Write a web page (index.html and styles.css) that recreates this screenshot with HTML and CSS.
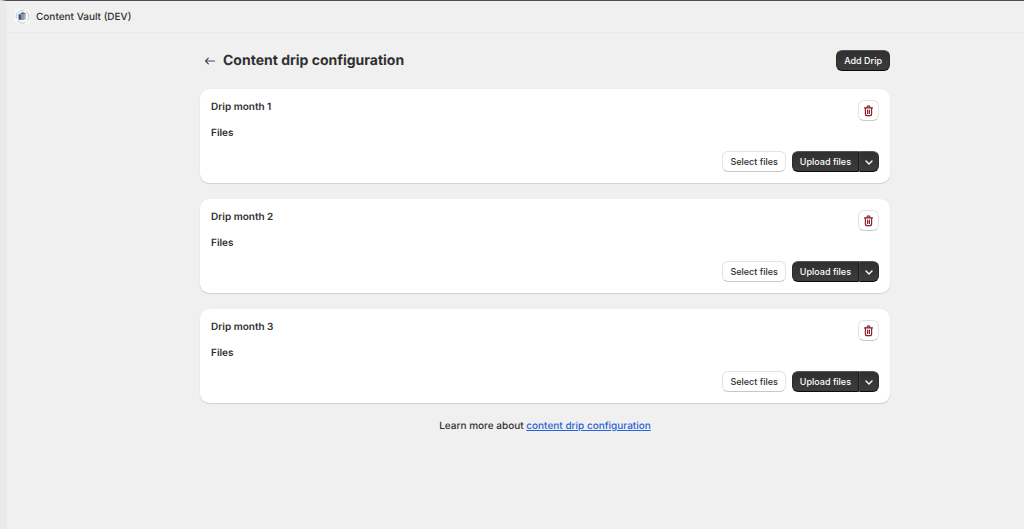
FILE: index.html
```html
<!DOCTYPE html>
<html lang="en">
<head>
<meta charset="UTF-8">
<meta name="viewport" content="width=device-width, initial-scale=1.0">
<title>Content Vault (DEV)</title>
<link rel="stylesheet" href="styles.css">
</head>
<body>
<svg class="sprite" aria-hidden="true">
  <symbol id="trash" viewBox="0 0 12 12">
    <path d="M1.500 2.900h8M4 2.700C4 .3 7 .3 7 2.700M2.400 3v5.700q0 2 1.800 2h2.600q1.800 0 1.800-2V3M4.600 5v3.400M6.400 5v3.400" fill="none" stroke="currentColor" stroke-width="1.200" stroke-linecap="round"/>
  </symbol>
  <symbol id="chevron" viewBox="0 0 10 10">
    <path d="M2 4l3 3 3-3" fill="none" stroke="currentColor" stroke-width="1.400" stroke-linecap="round" stroke-linejoin="round"/>
  </symbol>
</svg>

<header class="app-bar">
  <svg class="logo" viewBox="0 0 16 16" aria-hidden="true">
    <rect width="16" height="16" rx="4" fill="#fafafa"/>
    <path d="M1.500 10A7 7 0 0 1 10 1.500" fill="none" stroke="#8fc6e8" stroke-width=".9"/>
    <path d="M12 2.500A7 7 0 0 1 13 13M11 14.400A7 7 0 0 1 2.500 12" fill="none" stroke="#a9b3c3" stroke-width=".8"/>
    <path d="M3.800 5.500L8 3.800l3.500 1V11l-3.500 1-4.200-.8z" fill="#a4adbb"/>
    <path d="M3.800 5.500l3 .5v5.800l-3-.6z" fill="#4c5870"/>
    <path d="M6 4.600l2-.8 3 .9-2.500.8zM8.500 6v5.500" fill="#4c5870" stroke="#69758b" stroke-width=".7"/>
  </svg>
  <span>Content Vault (DEV)</span>
</header>

<main class="page">
  <div class="page-header">
    <a class="back" href="#" aria-label="Back">
      <svg viewBox="0 0 12 12"><path d="M10.500 6H1.500M4.300 3.200L1.500 6l2.800 2.800" fill="none" stroke="currentColor" stroke-width="1.200" stroke-linecap="round" stroke-linejoin="round"/></svg>
    </a>
    <h1>Content drip configuration</h1>
    <button class="btn btn-dark" type="button">Add Drip</button>
  </div>

  <section class="card">
    <div class="card-text">
      <h2>Drip month 1</h2>
      <h3>Files</h3>
    </div>
    <button class="btn btn-icon" type="button" aria-label="Delete drip month 1"><svg><use href="#trash"/></svg></button>
    <div class="actions">
      <button class="btn" type="button">Select files</button>
      <div class="btn-group">
        <button class="btn btn-dark" type="button">Upload files</button>
        <button class="btn btn-dark btn-more" type="button" aria-label="More upload options"><svg><use href="#chevron"/></svg></button>
      </div>
    </div>
  </section>

  <section class="card">
    <div class="card-text">
      <h2>Drip month 2</h2>
      <h3>Files</h3>
    </div>
    <button class="btn btn-icon" type="button" aria-label="Delete drip month 2"><svg><use href="#trash"/></svg></button>
    <div class="actions">
      <button class="btn" type="button">Select files</button>
      <div class="btn-group">
        <button class="btn btn-dark" type="button">Upload files</button>
        <button class="btn btn-dark btn-more" type="button" aria-label="More upload options"><svg><use href="#chevron"/></svg></button>
      </div>
    </div>
  </section>

  <section class="card">
    <div class="card-text">
      <h2>Drip month 3</h2>
      <h3>Files</h3>
    </div>
    <button class="btn btn-icon" type="button" aria-label="Delete drip month 3"><svg><use href="#trash"/></svg></button>
    <div class="actions">
      <button class="btn" type="button">Select files</button>
      <div class="btn-group">
        <button class="btn btn-dark" type="button">Upload files</button>
        <button class="btn btn-dark btn-more" type="button" aria-label="More upload options"><svg><use href="#chevron"/></svg></button>
      </div>
    </div>
  </section>

  <p class="help">Learn more about <a href="#">content drip configuration</a></p>
</main>
</body>
</html>
```
FILE: styles.css
```css
* {
  box-sizing: border-box;
}
body {
  margin: 0;
  min-height: 100vh;
  border-top: 1px solid #4f4b50;
  border-left: 7px solid #eaeaea;
  background-color: #f0f0f0;
  color: #303030;
  font-family: Inter, sans-serif;
  font-size: 10px;
  font-weight: 450;
  text-rendering: geometricPrecision;
}
h1, h2, h3, p {
  margin: 0;
}
.sprite {
  position: absolute;
  width: 0;
  height: 0;
}
.app-bar {
  display: flex;
  align-items: center;
  gap: 6px;
  height: 32px;
  padding-left: 8px;
  border-bottom: 1px solid #ebebeb;
}
.logo {
  width: 15px;
  height: 15px;
}
.page {
  max-width: 749px;
  margin: 0 auto;
  padding: 17px 0 32px 59px;
}
.page-header {
  display: flex;
  align-items: center;
  margin-bottom: 18px;
  padding-left: 4px;
}
.back {
  display: flex;
  margin-right: 7px;
  color: #4a4a4a;
}
.back svg {
  width: 12px;
  height: 12px;
}
h1 {
  flex: 1;
  font-size: 14px;
  line-height: 20px;
  font-weight: 700;
}
.card {
  display: grid;
  grid-template-columns: 1fr auto;
  align-items: start;
  row-gap: 10px;
  margin-bottom: 16px;
  padding: 11px;
  background-color: #fff;
  border-radius: 9px;
  box-shadow: 0 1px 1px rgba(0, 0, 0, 0.12), 0 0 1px rgba(0, 0, 0, 0.1);
}
h2, h3 {
  font-size: 10px;
  line-height: 15px;
  font-weight: 600;
}
h2 {
  margin-bottom: 11px;
}
.actions {
  grid-column: 1 / -1;
  display: flex;
  justify-content: flex-end;
  gap: 6px;
}
.btn {
  display: flex;
  align-items: center;
  justify-content: center;
  height: 21px;
  padding: 0 7px;
  border: 1px solid #e3e3e3;
  border-bottom-color: #c8c8c8;
  border-radius: 6px;
  background-color: #fff;
  color: #303030;
  font: 550 9px/14px Inter, sans-serif;
  cursor: pointer;
}
.btn-dark {
  border-color: #2a2a2a;
  border-top-color: #555;
  border-bottom-color: #0c0c0c;
  background-image: linear-gradient(#303030, #3c3c3c);
  color: #fff;
}
.btn-icon {
  width: 21px;
  padding: 0;
  color: #8e1f2f;
}
.btn-icon svg {
  width: 12px;
  height: 12px;
}
.btn-group {
  display: flex;
}
.btn-group .btn:first-child {
  border-right-color: #1a1a1a;
  border-radius: 6px 0 0 6px;
}
.btn-group .btn-more {
  width: 20px;
  padding: 0;
  border-left-color: #444;
  border-radius: 0 6px 6px 0;
}
.btn-more svg {
  width: 10px;
  height: 10px;
}
.help {
  line-height: 14px;
  text-align: center;
}
.help a {
  color: #2a62d8;
}
```
